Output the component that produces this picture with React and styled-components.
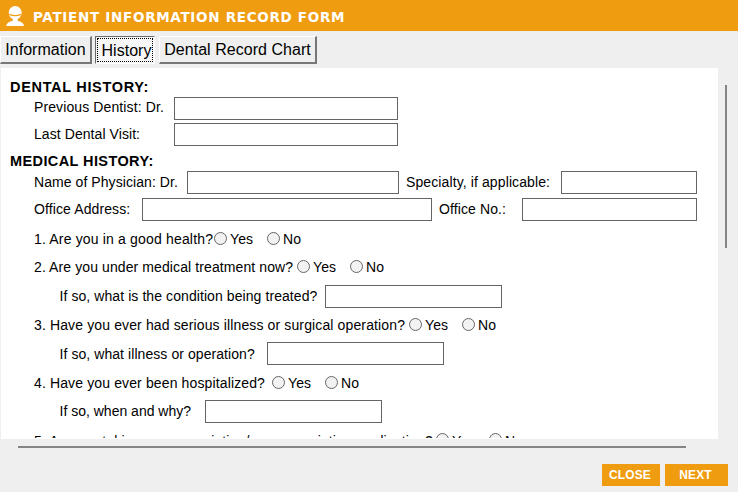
import React from "react";
import styled, { createGlobalStyle } from "styled-components";

const Global = createGlobalStyle`
  * { box-sizing: border-box; }
  html, body { margin: 0; padding: 0; overflow: hidden; }
  body { font-family: "Liberation Sans", Arial, sans-serif; color: #000; }
`;

const Window = styled.div`
  width: 738px;
  height: 492px;
  background: #efefef;
  display: flex;
  flex-direction: column;
  overflow: hidden;
`;

const TitleBar = styled.header`
  flex: none;
  height: 31px;
  padding-left: 6px;
  background: #f09c11;
  display: flex;
  align-items: center;
  gap: 9px;
`;

const Title = styled.h1`
  margin: 0;
  padding-top: 3px;
  color: #fff;
  font: bold 13.5px/16px "DejaVu Sans", Verdana, sans-serif;
  letter-spacing: 0.7px;
  white-space: nowrap;
`;

const Tabs = styled.nav`
  flex: none;
  height: 37px;
  padding-top: 5px;
  display: flex;
  align-items: flex-start;
`;

const Tab = styled.button`
  flex: none;
  width: ${(p) => p.$width}px;
  height: 28px;
  margin: 0 ${(p) => p.$gap || 0}px 0 0;
  padding: ${(p) => (p.$active ? "1px 0 0 3px" : "0")};
  border: solid;
  border-width: ${(p) => (p.$active ? "1px" : "1px 2px 2px 1px")};
  border-color: ${(p) => (p.$active ? "#696969 #fff #fff #696969" : "#fff #777 #777 #fff")};
  background: ${(p) =>
    p.$active ? "repeating-conic-gradient(#fff 0 25%, #f0f0f0 0 50%) 0 0 / 2px 2px" : "#efefef"};
  outline: ${(p) => (p.$active ? "1px dotted #000" : "none")};
  outline-offset: -3px;
  font: 16px/22px "Liberation Sans", Arial, sans-serif;
  letter-spacing: 0.04px;
  color: #000;
  text-align: center;
  white-space: nowrap;
`;

const Body = styled.main`
  flex: none;
  height: 371px;
  padding-left: 1px;
  display: flex;
`;

const Panel = styled.section`
  width: 717px;
  height: 371px;
  background: #fff;
  padding: 10px 0 0 9px;
  border-bottom: 1px solid #fff;
  overflow: hidden;
  font-size: 14px;
`;

const Heading = styled.h2`
  margin: 0;
  height: ${(p) => p.$height}px;
  font: bold 14.5px/19px "Liberation Sans", Arial, sans-serif;
  letter-spacing: ${(p) => p.$spacing}px;
`;

const Row = styled.div`
  display: flex;
  align-items: flex-start;
  height: ${(p) => p.$height}px;
  padding-left: ${(p) => (p.$nested ? 49.5 : 24)}px;
`;

const Label = styled.label`
  flex: none;
  width: ${(p) => p.$width}px;
  padding-left: ${(p) => p.$inset || 0}px;
  line-height: ${(p) => p.$line || 21}px;
  letter-spacing: ${(p) => p.$spacing ?? 0.11}px;
  white-space: nowrap;
`;

const Field = styled.input`
  flex: none;
  width: ${(p) => p.$width}px;
  height: 23px;
  margin: 0;
  padding: 1px 4px;
  border: 1px solid #646464;
  border-radius: 0;
  background: #fff;
  font: inherit;
  outline: none;
`;

const Choice = styled.label`
  flex: none;
  width: 53px;
  display: flex;
  gap: 3px;
  line-height: ${(p) => p.$line}px;
  letter-spacing: 0.13px;
`;

const Radio = styled.input`
  appearance: none;
  flex: none;
  width: 13px;
  height: 13px;
  margin: 0;
  border: 1px solid #666;
  border-radius: 50%;
  background: #f2f2f2;
`;

const VerticalBar = styled.div`
  width: 2px;
  height: 163px;
  margin: 17px 0 0 7px;
  background: #858585;
`;

const HorizontalBar = styled.div`
  flex: none;
  width: 668px;
  height: 2px;
  margin: 7px 0 0 18px;
  background: #858585;
`;

const Footer = styled.footer`
  flex: none;
  margin-top: 16px;
  padding-right: 10px;
  display: flex;
  justify-content: flex-end;
  gap: 5px;
`;

const Action = styled.button`
  width: ${(p) => p.$width}px;
  height: 22px;
  padding: 0 ${(p) => p.$shift || 0}px 0 0;
  border: 0;
  background: #f09c11;
  color: #fff;
  font: bold 12px/22px "Liberation Sans", Arial, sans-serif;
  letter-spacing: ${(p) => p.$spacing}px;
`;

function PatientIcon() {
  return (
    <svg width="18" height="20" viewBox="0 0 18 20">
      <ellipse cx="9.2" cy="6.7" rx="6.5" ry="6.7" fill="#fff" />
      <path d="M3.4 8.3Q9.2 10.8 15 8.3" fill="none" stroke="#f09c11" strokeWidth="1.3" />
      <path d="M6.7 12.5H11.7V15Q17.4 15.8 18 20H.2Q.8 15.8 6.7 15Z" fill="#fff" />
    </svg>
  );
}

function Question({ text, width, height, spacing, line = 15 }) {
  return (
    <Row $height={height}>
      <Label $width={width} $line={line} $spacing={spacing}>{text}</Label>
      {["Yes", "No"].map((answer) => (
        <Choice key={answer} $line={line}>
          <Radio type="radio" name={text} />
          {answer}
        </Choice>
      ))}
    </Row>
  );
}

export default function App() {
  return (
    <Window>
      <Global />
      <TitleBar>
        <PatientIcon />
        <Title>PATIENT INFORMATION RECORD FORM</Title>
      </TitleBar>
      <Tabs>
        <Tab $width={92} $gap={3}>Information</Tab>
        <Tab $width={60} $gap={4} $active>History</Tab>
        <Tab $width={158}>Dental Record Chart</Tab>
      </Tabs>
      <Body>
        <Panel>
          <Heading $height={19} $spacing={0.68}>DENTAL HISTORY:</Heading>
          <Row $height={26}>
            <Label $width={140}>Previous Dentist: Dr.</Label>
            <Field $width={224} />
          </Row>
          <Row $height={29}>
            <Label $width={140} $line={22} $spacing={0.07}>Last Dental Visit:</Label>
            <Field $width={224} />
          </Row>
          <Heading $height={19} $spacing={0.4}>MEDICAL HISTORY:</Heading>
          <Row $height={27}>
            <Label $width={153} $line={22} $spacing={0.07}>Name of Physician: Dr.</Label>
            <Field $width={212} />
            <Label $width={162} $line={22} $inset={7}>Specialty, if applicable:</Label>
            <Field $width={136} />
          </Row>
          <Row $height={34}>
            <Label $width={108} $line={22}>Office Address:</Label>
            <Field $width={290} />
            <Label $width={90} $line={22} $inset={7}>Office No.:</Label>
            <Field $width={175} />
          </Row>
          <Question text="1. Are you in a good health?" width={180} height={28} spacing={0.17} />
          <Question text="2. Are you under medical treatment now?" width={263} height={25} spacing={0.1} />
          <Row $height={33} $nested>
            <Label $width={265.5} $line={23} $spacing={0.08}>If so, what is the condition being treated?</Label>
            <Field $width={177} />
          </Row>
          <Question
            text="3. Have you ever had serious illness or surgical operation?"
            width={375}
            height={24}
            spacing={0.13}
          />
          <Row $height={34} $nested>
            <Label $width={207.5} $line={24} $spacing={0.07}>If so, what illness or operation?</Label>
            <Field $width={177} />
          </Row>
          <Question text="4. Have you ever been hospitalized?" width={238} height={24} spacing={0.13} />
          <Row $height={33} $nested>
            <Label $width={145.5} $line={22} $spacing={0}>If so, when and why?</Label>
            <Field $width={177} />
          </Row>
          <Question
            text="5. Are you taking any prescription/non-prescription medication?"
            width={402}
            height={20}
            spacing={0.13}
            line={17}
          />
        </Panel>
        <VerticalBar />
      </Body>
      <HorizontalBar />
      <Footer>
        <Action $width={58} $shift={2} $spacing={0.1}>CLOSE</Action>
        <Action $width={63} $shift={2} $spacing={0.1}>NEXT</Action>
      </Footer>
    </Window>
  );
}
